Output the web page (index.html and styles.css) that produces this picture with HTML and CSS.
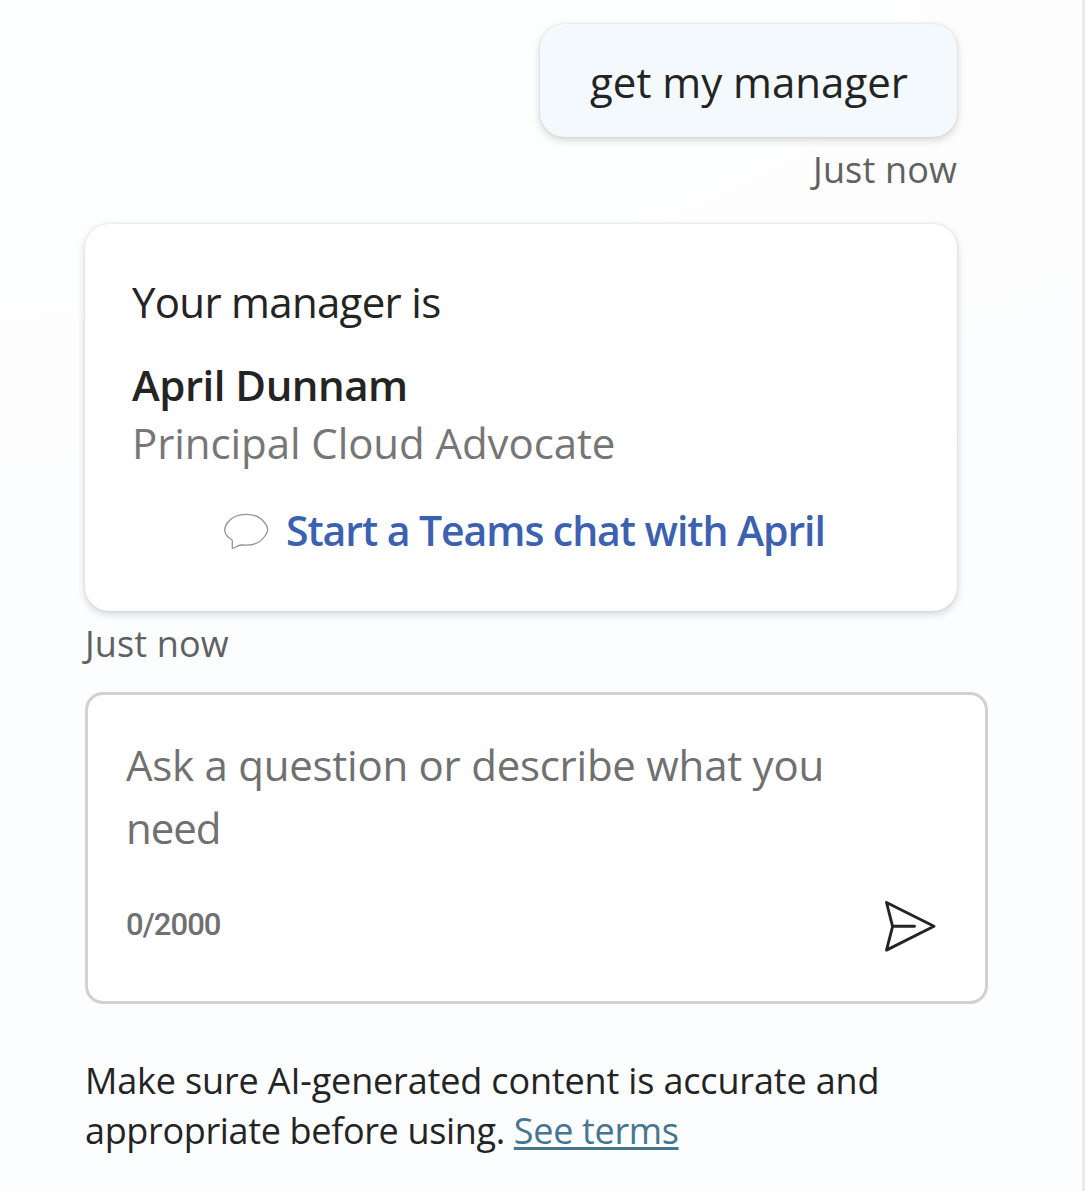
FILE: index.html
```html
<!DOCTYPE html>
<html lang="en">
<head>
<meta charset="utf-8">
<title>Chat</title>
<link rel="stylesheet" href="styles.css">
</head>
<body>
<main class="chat">
  <section class="message message-user">
    <div class="bubble bubble-user">get my manager</div>
    <time class="stamp">Just now</time>
  </section>
  <section class="message message-bot">
    <div class="bubble bubble-bot">
      <p class="intro">Your manager is</p>
      <p class="name">April Dunnam</p>
      <p class="role">Principal Cloud Advocate</p>
      <a class="action">
        <svg class="action-icon" width="48" height="40" viewBox="0 0 48 40" fill="none" stroke="#979593" stroke-width="1.3" stroke-linejoin="round"><path d="M24.500 4.300C14.500 4.300 9.500 7.500 6 12C3.800 15 2.700 17.500 2.700 20C2.700 24 6 27.500 10.300 30.200V38.300C11.500 38.700 13.500 37 16 35.800C18.500 34.600 20 34.900 24.500 35.200C34 35.200 39.500 31 43 26C44.800 23.500 45.700 21.500 45.700 19.700C45.700 17.500 44.500 15 42 12C38 7 33 4.300 24.500 4.300Z"/></svg>
        <span class="action-label">Start a Teams chat with April</span>
      </a>
    </div>
    <time class="stamp">Just now</time>
  </section>
  <section class="composer">
    <p class="placeholder">Ask a question or describe what you<br><span class="placeholder-end">need</span></p>
    <div class="composer-footer">
      <span class="count">0/2000</span>
      <svg class="send" width="54" height="54" viewBox="0 0 54 54" fill="none" stroke="#242424" stroke-width="2.9" stroke-linejoin="round" stroke-linecap="round"><path d="M3.500 3.500L51 27.300L3.500 51.100L9.600 27.300ZM9.600 27.300H31.500"/></svg>
    </div>
  </section>
  <p class="terms">Make sure AI-generated content is accurate and<br><span class="terms-end">appropriate before using. <a class="terms-link">See terms</a></span></p>
</main>
</body>
</html>
```
FILE: styles.css
```css
* { box-sizing: border-box; }
body {
  margin: 0;
  min-height: 1191px;
  font-family: "Open Sans", "Noto Sans", sans-serif;
  color: #242424;
  background: radial-gradient(ellipse 900px 310px at 0 0, #fdfffe 0%, #fdfffe 97%, #fdfdfd 103%, #fdfdfd 125%, #fcfdff 180%);
  border-right: 3px solid #ebe9e9;
}
p { margin: 0; }
.chat { width: 903px; margin-left: 85px; padding-top: 24px; }
.message { display: flex; flex-direction: column; width: 872px; white-space: nowrap; }
.message-user { align-items: flex-end; }
.message-bot { margin-top: 29px; }
.bubble {
  border-radius: 24px;
  box-shadow: 0 0 2px rgba(0, 0, 0, .12), 0 3px 8px rgba(0, 0, 0, .17);
  font-size: 42px;
  line-height: 60px;
}
.bubble-user { width: 417px; height: 113px; padding: 28px 50px 0; background: #f3f9fd; }
.bubble-bot { height: 387px; padding: 48px 47px 0; background: #fff; }
.stamp { height: 58px; padding-top: 8px; font-size: 36px; line-height: 50px; color: #616161; letter-spacing: .15px; }
.intro { height: 83px; letter-spacing: -.7px; }
.name { height: 58px; font-weight: 600; letter-spacing: -.5px; }
.role { height: 87px; color: #767676; letter-spacing: -.08px; }
.action { display: flex; align-items: flex-start; gap: 16px; padding-left: 90px; color: #3c61b0; font-weight: 600; font-size: 41px; letter-spacing: -1.07px; }
.action-icon { flex: none; margin-top: 10px; }
.composer {
  height: 312px;
  margin-top: 23px;
  padding: 38px 38px 0;
  border: 3px solid #d1d1d1;
  border-radius: 18px;
  background: #fff;
}
.placeholder { font-size: 42px; line-height: 63px; color: #707070; letter-spacing: -.25px; white-space: nowrap; }
.placeholder-end { letter-spacing: -1.1px; }
.composer-footer { display: flex; justify-content: space-between; margin-top: 40px; padding-right: 10px; }
.count { padding-top: 3px; font: 500 31px/46px Roboto, sans-serif; color: #707070; letter-spacing: -.95px; }
.terms { margin-top: 52px; font-size: 36px; line-height: 50px; letter-spacing: -.16px; white-space: nowrap; }
.terms-end { letter-spacing: -.34px; }
.terms-link { color: #467590; text-decoration: underline; text-decoration-thickness: 3px; text-underline-offset: 3px; text-decoration-skip-ink: none; }
```
